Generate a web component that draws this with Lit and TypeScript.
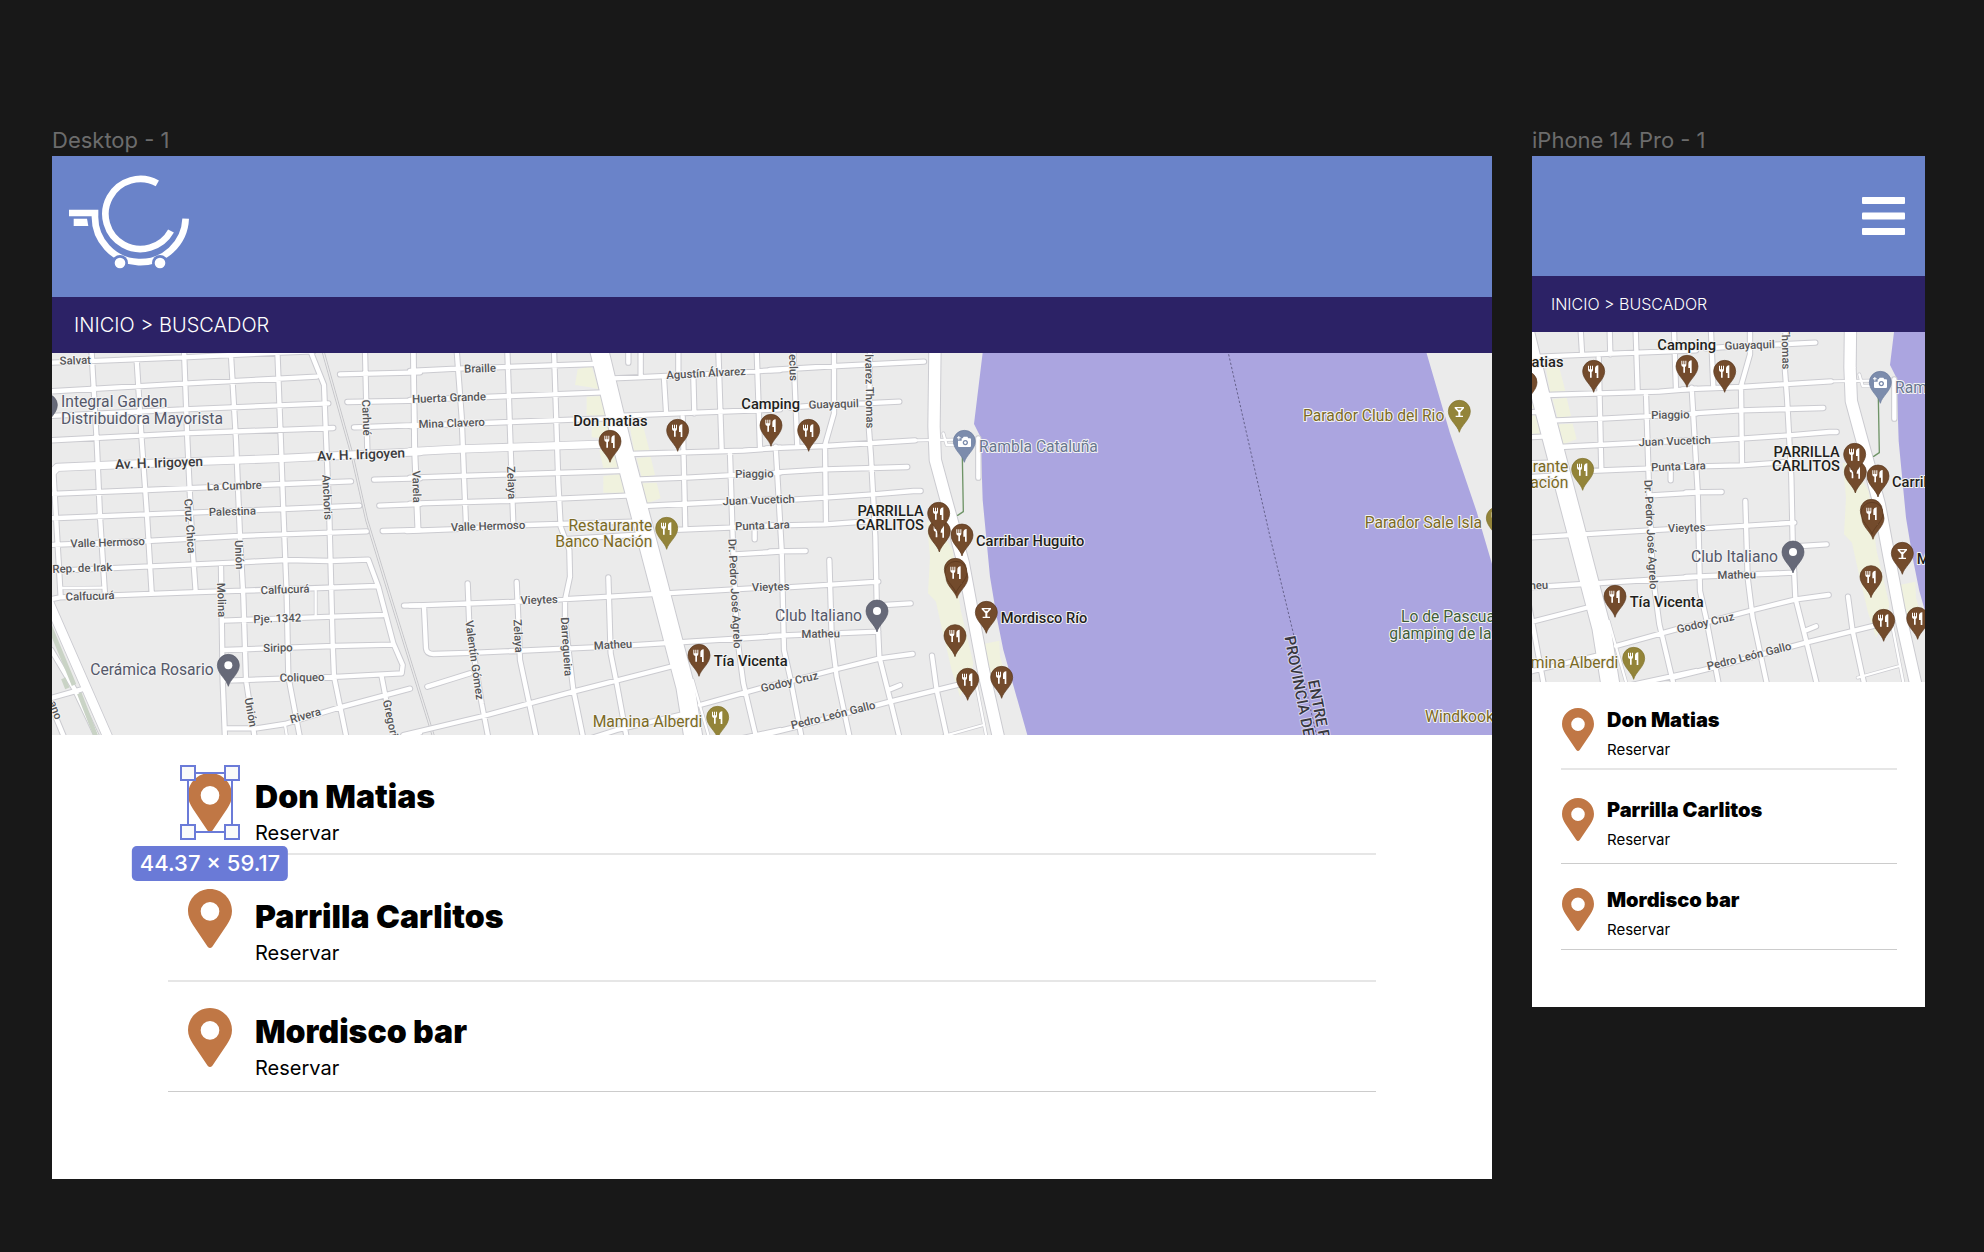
import { LitElement, html, css, svg } from "lit";
import { customElement, property } from "lit/decorators.js";
import { classMap } from "lit/directives/class-map.js";

/* ---------- map data: three drawing units per map pixel, in four sheets ---------- */

type Sheet = "a" | "b" | "c" | "d";
const SHEET_X: Record<Sheet, number> = { a: -6, b: 1074, c: 2154, d: 3234 };
const SHEET_Y = -9;

const STREETS: Record<string, string> = {
  a: `M0 38L400 22L690 8L790 4 M0 124L400 101L800 80 M0 198L400 178L835 160 M0 271L400 250L850 234
    M0 432L290 420L470 412L700 402L903 394 M0 505L290 493L700 477L928 467 M0 585L290 573L565 558L950 544
    M0 663L300 649L570 637L710 630L840 633L955 629L985 710L1030 880L1058 945L1055 970L870 980L530 992
    M0 748L30 742L400 728L580 722L980 708 M520 812L850 800L1000 795 M525 900L850 888L1030 884
    M530 1135L620 1135L705 1122L870 1072L1080 1016 M870 73L1110 67 M892 156L1110 152 M912 232L1110 225
    M972 389L1110 385 M988 467L1110 462 M998 543L1110 540 M1062 767L1110 766
    M10 365L18 500L32 740 M125 10L140 270L150 500L165 735 M260 30L275 270L290 480L305 728
    M402 0L412 270L420 440L428 600L437 725 M542 0L558 270L570 560L580 740L588 990L618 1190
    M682 0L692 260L700 480L710 730L715 980L755 1190 M780 0L822 105L828 260L838 500L848 880L852 980L895 1190
    M513 650L518 990L526 1190 M945 0L952 300 M1090 0L1093 300L1103 540 M995 980L1035 1190
    M1050 1164L1110 1148 M0 1045L95 1018 M0 1060L50 1180`,
  b: `M0 63L140 56L550 42 M0 150L300 138L580 127 M0 228L300 216L590 205 M0 383L150 378L630 363
    M0 461L310 452L650 437 M-10 543L120 538L350 525L670 515 M450 568L720 552 M0 767L330 755L600 740L1110 710
    M42 770L48 895Q50 912 70 912L200 908L600 890L1110 858
    M10 0L15 300L25 540 M140 0L155 200L162 380L168 525 M292 0L302 300L310 525
    M432 0L445 400L452 530L478 600L480 680L465 750L465 810L490 1020L525 1190
    M173 700L178 830L215 1060L240 1190 M320 696L325 810L330 930L385 1190 M595 682L602 910L620 1000L655 1190
    M52 1010L180 970 M-20 1155L220 1098L490 1025L790 948 M520 1172L620 1140L830 1090
    M610 85L770 78L1110 60 M640 197L860 188L1110 178 M660 312L1000 302L1110 293 M690 388L830 383L1110 368
    M700 468L1110 447 M780 540L960 533L1110 525 M975 613L1110 605
    M655 0L655 38 M692 0L692 82 M762 85L768 185 M805 0L805 75 M850 80L853 190 M925 0L935 300 M818 200L826 535
    M1040 0L1050 295 M960 310L968 560L980 850L1000 1000L1045 1190 M1034 525L1034 568 M870 1065L1050 1015L1110 1000
    M880 1190L1110 1140`,
  c: `M0 60L200 48L462 35 M60 172L120 168L388 155 M-10 295L165 288L435 271 M20 367L165 358L412 351
    M0 453L165 443L310 433L430 423L452 423 M0 527L165 523L310 513 M0 604L107 603 M0 715L185 704L325 695
    M0 858L325 845 M345 765L422 760 M0 1010L190 960L330 925L428 912 M-40 1160L60 1135L360 1055L590 998
    M355 1020L390 1006 M70 0L82 290 M192 0L192 190L165 285L168 520
    M300 0L297 240L303 320L316 560L320 750L328 920L362 1055L395 1190 M17 290L35 600L42 900L60 980L100 1190
    M178 630L185 860L200 980L245 1190 M486 917L500 1020L537 1190 M625 265L625 383`,
};

const NARROW: Record<string, string> = {
  a: `M32 714L165 713 M797 722L797 800 M705 1125L716 1190`,
  b: `M848 990L905 1190`,
  c: `M435 271L600 268 M520 250L530 285L560 285 M515 1160L640 1125 M612 970L655 1190`,
};

const AVENUES: Record<string, string> = {
  a: `M4 370L22 352L420 335L700 325L1110 305`,
  b: `M0 305L150 297L600 282`,
};

const BOULEVARD = `M565 -10L640 300L745 700L797 900L826 1010L856 1200`;
const RIVERSIDE = `M495 -10L492 230L496 330L523 430L548 520L580 640L606 780L640 960L694 1200`;
const WATER = `M639 0L612 222L632 262L638 450L660 680L680 800L700 900L772 1155L784 1200H2300V1100L2120 485L2040 250L1967 0Z`;

const PARKS: Record<string, string> = {
  b: `M503 58L545 48L566 118L540 112L495 105Z M530 140L575 138L592 200L530 195Z M545 215L604 212L616 240L580 265L545 262Z
    M568 300L612 295L627 352L580 354Z M580 378L632 372L642 428L580 428Z M660 232L700 230L718 300L672 303Z
    M680 325L722 320L735 375L695 382Z M697 400L740 398L752 445L712 460Z`,
  c: `M470 515L500 520L548 600L572 780L610 940L604 970L570 1040L545 960L512 820L498 755L474 730L480 620Z
    M640 882L688 872L690 920L712 990L660 980Z`,
};

type Kind = "street" | "road" | "place" | "poi" | "food" | "sight" | "camp" | "border";
type Anchor = "start" | "middle" | "end";
interface Label { s: Sheet; x: number; y: number; t: string; k?: Kind; r?: number; a?: Anchor }

const LABELS: Label[] = [
  { s: "a", x: 76, y: 31, t: "Salvat", r: -2 },
  { s: "a", x: 950, y: 203, t: "Carhué", r: 88 },
  { s: "a", x: 327, y: 338, t: "Av. H. Irigoyen", k: "road", r: -2 },
  { s: "a", x: 933, y: 313, t: "Av. H. Irigoyen", k: "road", r: -2 },
  { s: "a", x: 553, y: 407, t: "La Cumbre", r: -2 },
  { s: "a", x: 547, y: 484, t: "Palestina", r: -2 },
  { s: "a", x: 420, y: 528, t: "Cruz Chica", r: 86 },
  { s: "a", x: 832, y: 442, t: "Anchoris", r: 87 },
  { s: "a", x: 173, y: 577, t: "Valle Hermoso", r: -2 },
  { s: "a", x: 568, y: 614, t: "Unión", r: 88 },
  { s: "a", x: 97, y: 654, t: "Rep. de Irak", r: -2 },
  { s: "a", x: 515, y: 750, t: "Molina", r: 88 },
  { s: "a", x: 120, y: 738, t: "Calfucurá", r: -2 },
  { s: "a", x: 705, y: 718, t: "Calfucurá", r: -2 },
  { s: "a", x: 682, y: 805, t: "Pje. 1342", r: -2 },
  { s: "a", x: 684, y: 893, t: "Siripo", r: -1 },
  { s: "a", x: 756, y: 982, t: "Coliqueo", r: -1 },
  { s: "a", x: 603, y: 1087, t: "Unión", r: 80 },
  { s: "a", x: 766, y: 1096, t: "Rivera", r: -16 },
  { s: "a", x: 1010, y: 1050, t: "Gregori", r: 78, a: "start" },
  { s: "a", x: 17, y: 1080, t: "ano", r: 70 },
  { s: "a", x: 33, y: 156, t: "Integral Garden", k: "place", a: "start" },
  { s: "a", x: 33, y: 207, t: "Distribuidora Mayorista", k: "place", a: "start" },
  { s: "a", x: 491, y: 960, t: "Cerámica Rosario", k: "place", a: "end" },
  { s: "b", x: 20, y: 410, t: "Varela", r: 88 },
  { s: "b", x: 210, y: 55, t: "Braille", r: -2 },
  { s: "b", x: 117, y: 143, t: "Huerta Grande", r: -2 },
  { s: "b", x: 125, y: 219, t: "Mina Clavero", r: -2 },
  { s: "b", x: 305, y: 398, t: "Zelaya", r: 88 },
  { s: "b", x: 234, y: 528, t: "Valle Hermoso", r: -2 },
  { s: "b", x: 888, y: 69, t: "Agustín Álvarez", r: -3 },
  { s: "b", x: 1033, y: 371, t: "Piaggio", r: -1 },
  { s: "b", x: 1046, y: 450, t: "Juan Vucetich", r: -2 },
  { s: "b", x: 1057, y: 526, t: "Punta Lara", r: -2 },
  { s: "b", x: 975, y: 731, t: "Dr. Pedro José Agrelo", r: 87 },
  { s: "b", x: 387, y: 749, t: "Vieytes", r: -2 },
  { s: "b", x: 194, y: 930, t: "Valentín Gómez", r: 82 },
  { s: "b", x: 325, y: 858, t: "Zelaya", r: 87 },
  { s: "b", x: 470, y: 890, t: "Darregueira", r: 86 },
  { s: "b", x: 609, y: 884, t: "Matheu", r: -3 },
  { s: "b", x: 601, y: 213, t: "Don matias", k: "poi" },
  { s: "b", x: 1082, y: 162, t: "Camping", k: "poi" },
  { s: "b", x: 911, y: 933, t: "Tía Vicenta", k: "poi", a: "start" },
  { s: "b", x: 727, y: 526, t: "Restaurante", k: "food", a: "end" },
  { s: "b", x: 727, y: 574, t: "Banco Nación", k: "food", a: "end" },
  { s: "b", x: 877, y: 1116, t: "Mamina Alberdi", k: "food", a: "end" },
  { s: "c", x: 191, y: 162, t: "Guayaquil", r: -2 },
  { s: "c", x: 72, y: 93, t: "eclus", r: 88, a: "end" },
  { s: "c", x: 301, y: 235, t: "lvarez Thomas", r: 89, a: "end" },
  { s: "c", x: 2, y: 710, t: "Vieytes", r: -2 },
  { s: "c", x: 152, y: 851, t: "Matheu", r: -1 },
  { s: "c", x: 58, y: 995, t: "Godoy Cruz", r: -13 },
  { s: "c", x: 189, y: 1095, t: "Pedro León Gallo", r: -14 },
  { s: "c", x: 461, y: 483, t: "PARRILLA", k: "poi", a: "end" },
  { s: "c", x: 462, y: 526, t: "CARLITOS", k: "poi", a: "end" },
  { s: "c", x: 618, y: 572, t: "Carribar Huguito", k: "poi", a: "start" },
  { s: "c", x: 692, y: 804, t: "Mordisco Río", k: "poi", a: "start" },
  { s: "c", x: 276, y: 797, t: "Club Italiano", k: "place", a: "end" },
  { s: "c", x: 627, y: 289, t: "Rambla Cataluña", k: "sight", a: "start" },
  { s: "d", x: 943, y: 198, t: "Parador Club del Rio", k: "food", a: "end" },
  { s: "d", x: 1056, y: 519, t: "Parador Sale Isla", k: "food", a: "end" },
  { s: "d", x: 813, y: 801, t: "Lo de Pascua", k: "camp", a: "start" },
  { s: "d", x: 778, y: 851, t: "glamping de la", k: "camp", a: "start" },
  { s: "d", x: 885, y: 1099, t: "Windkook", k: "food", a: "start" },
  { s: "d", x: 479, y: 858, t: "PROVINCIA DE", k: "border", r: 79, a: "start" },
  { s: "d", x: 550, y: 990, t: "ENTRE R", k: "border", r: 79, a: "start" },
];

type Glyph = "fork" | "glass" | "dot" | "camera";
const PINS: [Sheet, number, number, string, Glyph][] = [
  ["a", -11, 165, "slate", "dot"],
  ["a", 535, 946, "slate", "dot"],
  ["b", 600, 274, "brown", "fork"],
  ["b", 803, 241, "brown", "fork"],
  ["b", 1083, 226, "brown", "fork"],
  ["b", 867, 916, "brown", "fork"],
  ["b", 770, 535, "olive", "fork"],
  ["b", 923, 1102, "olive", "fork"],
  ["c", 116, 241, "brown", "fork"],
  ["c", 583, 274, "steel", "camera"],
  ["c", 508, 543, "brown", "fork"],
  ["c", 506, 490, "brown", "fork"],
  ["c", 576, 555, "brown", "fork"],
  ["c", 556, 658, "brown", "fork"],
  ["c", 561, 682, "brown", "fork"],
  ["c", 558, 667, "brown", "fork"],
  ["c", 649, 787, "brown", "glass"],
  ["c", 321, 783, "slate", "dot"],
  ["c", 555, 857, "brown", "fork"],
  ["c", 593, 988, "brown", "fork"],
  ["c", 695, 982, "brown", "fork"],
  ["d", 988, 184, "olive", "glass"],
  ["d", 1102, 504, "olive", "fork"],
];

const GLYPHS: Record<Glyph, unknown> = {
  fork: svg`<path class="glyph" d="M-17 -17h3v11h3v-11h3v11h3v-11h3v13q0 5-4 6v17h-5v-17q-6-1-6-6zM14 -18v38h-5v-15h-5v-13q0-9 10-10z"/>`,
  glass: svg`<path class="glyph" fill-rule="evenodd" d="M-14 -13h28v4l-11 12v10h8v4h-22v-4h8v-10l-11-12zM-7 -9l3 4h8l3-4z"/>`,
  dot: svg`<circle class="glyph" r="12"/>`,
  camera: svg`<path class="glyph" fill-rule="evenodd" d="M-8 -9h3l3-5h11l3 5h5q3 0 3 3v20q0 3-3 3h-33q-3 0-3-3v-16h11zM3 -4a8 8 0 1 0 .1 0zM3 0a4 4 0 1 1-.1 0zM-18 -16h3v4h4v3h-4v4h-3v-4h-4v-3h4z"/>`,
};

/* ---------- street map ---------- */

@customElement("street-map")
export class StreetMap extends LitElement {
  @property() view = "0 0 4320 1146";

  static styles = css`
    :host { display: block; }
    .map { display: block; width: 100%; height: auto; background: #ebebeb; }
    .line { fill: none; stroke-linecap: round; stroke-linejoin: round; }
    .casing { stroke: #cbcbd0; }
    .fill { stroke: #fff; }
    .street.casing { stroke-width: 19; }
    .street.fill { stroke-width: 13; }
    .narrow.casing { stroke-width: 11; }
    .narrow.fill { stroke-width: 7; }
    .avenue.casing { stroke-width: 27; }
    .avenue.fill { stroke-width: 22; }
    .boulevard.casing { stroke-width: 60; }
    .boulevard.fill { stroke-width: 54; }
    .riverside.casing { stroke-width: 40; }
    .riverside.fill { stroke-width: 34; }
    .highway.casing { stroke-width: 32; }
    .highway.fill { stroke-width: 27; }
    .water { fill: #aba5e0; }
    .park { fill: #f0f2de; }
    .verge { fill: none; stroke: #c9d3c5; stroke-width: 14; }
    .rail { stroke: #c4c4c8; stroke-width: 9; }
    .rail-core { stroke: #ebebeb; stroke-width: 4; }
    .trail { stroke: #6f9467; stroke-width: 4; }
    .frontier { stroke: #66628c; stroke-width: 3; stroke-dasharray: 7 6; stroke-linecap: butt; }
    .label {
      font-family: Roboto, "Noto Sans", sans-serif;
      font-size: 34px;
      font-weight: 500;
      fill: #555557;
      stroke: #f4f4f4;
      stroke-width: 6;
      stroke-linejoin: round;
      paint-order: stroke;
    }
    .road { font-size: 41px; fill: #3a3a3c; }
    .poi { font-size: 44px; fill: #1f1f20; }
    .border { font-size: 46px; fill: #38383e; stroke: #d6d3f0; }
    .place, .food, .sight, .camp { font-size: 47px; font-weight: 400; }
    .place { fill: #55586a; }
    .food { fill: #7b6a24; }
    .sight { fill: #68768f; }
    .camp { fill: #3f5c3a; }
    .pin { stroke-width: 2; }
    .brown { fill: #734b2c; stroke: #57371d; }
    .olive { fill: #938439; stroke: #7f712b; }
    .slate { fill: #666978; stroke: #575a69; }
    .steel { fill: #7c8cac; stroke: #697a9c; }
    .glyph { fill: #fff; stroke: none; }
  `;

  private sheet(s: string, content: unknown) {
    return svg`<g transform="translate(${SHEET_X[s as Sheet]} ${SHEET_Y})">${content}</g>`;
  }

  private lines(set: Record<string, string>, name: string) {
    return Object.entries(set).map(([s, d]) => this.sheet(s, svg`<path class="line ${name}" d=${d}/>`));
  }

  private network(pass: string) {
    return svg`
      ${this.lines(NARROW, `narrow ${pass}`)}
      ${this.lines(STREETS, `street ${pass}`)}
      ${this.lines(AVENUES, `avenue ${pass}`)}
      ${this.lines({ a: "M-12 735L0 765L186 1190" }, `highway ${pass}`)}
      ${this.lines({ a: "M4 900L75 1020L155 1190" }, `street ${pass}`)}
      ${this.lines({ b: BOULEVARD }, `boulevard ${pass}`)}
      ${this.lines({ c: RIVERSIDE }, `riverside ${pass}`)}`;
  }

  /* Only the labels that reach into the current view are drawn. */
  private inView(l: Label) {
    const [left, top, width, height] = this.view.split(" ").map(Number);
    const length = l.t.length * (l.k ? 21 : 17);
    const angle = ((l.r ?? 0) * Math.PI) / 180;
    const from = l.a === "start" ? 0 : l.a === "end" ? -length : -length / 2;
    const x = l.x + SHEET_X[l.s];
    const y = l.y + SHEET_Y;
    const xs = [x + from * Math.cos(angle), x + (from + length) * Math.cos(angle)];
    const ys = [y + from * Math.sin(angle), y + (from + length) * Math.sin(angle)];
    return Math.max(...xs) > left && Math.min(...xs) < left + width
      && Math.max(...ys) > top && Math.min(...ys) < top + height;
  }

  render() {
    return html`
      <svg class="map" viewBox=${this.view} role="img" aria-label="Mapa de restaurantes">
        ${Object.entries(PARKS).map(([s, d]) => this.sheet(s, svg`<path class="park" d=${d}/>`))}
        ${this.sheet("c", svg`<path class="water" d=${WATER}/>`)}
        ${this.lines({ a: "M818 0L905 310L950 510L1005 690L1110 1030L1160 1190" }, "rail")}
        ${this.lines({ a: "M818 0L905 310L950 510L1005 690L1110 1030L1160 1190" }, "rail-core")}
        ${this.network("casing")}
        ${this.network("fill")}
        ${this.sheet("a", svg`<path class="verge" d="M0 830L72 1005M40 985L52 1015M88 1030L146 1180"/>`)}
        ${this.lines({ c: "M577 320L580 485L563 496" }, "trail")}
        ${this.lines({ d: "M293 0L420 560L490 850L565 1180" }, "frontier")}
        ${LABELS.filter((l) => this.inView(l)).map((l) => svg`
          <text class="label ${l.k ?? "street-name"}" dy="0.35em" text-anchor=${l.a ?? "middle"}
            transform="translate(${l.x + SHEET_X[l.s]} ${l.y + SHEET_Y}) rotate(${l.r ?? 0})">${l.t}</text>`)}
        ${PINS.map(([s, x, y, tone, glyph]) => svg`
          <g transform="translate(${x + SHEET_X[s]} ${y + SHEET_Y})">
            <path class="pin ${tone}" d="M0 63C-5 42-33 25-33 0A33 33 0 1 1 33 0C33 25 5 42 0 63Z"/>
            ${GLYPHS[glyph]}
          </g>`)}
      </svg>`;
  }
}

/* ---------- list of venues ---------- */

const VENUES = ["Don Matias", "Parrilla Carlitos", "Mordisco bar"];

@customElement("venue-list")
export class VenueList extends LitElement {
  @property({ type: Boolean }) compact = false;
  @property({ type: Boolean }) selection = false;

  static styles = css`
    :host { display: block; font-family: Inter, "Open Sans", sans-serif; color: #000; }
    .list { list-style: none; margin: 0; padding: 0 116px 87px; }
    .row {
      display: grid;
      grid-template-columns: 44px 1fr;
      column-gap: 23px;
      align-items: start;
      padding-left: 20px;
      border-bottom: 2px solid #e6e6e6;
    }
    .row:nth-child(1) { padding-top: 38px; padding-bottom: 8px; }
    .row:nth-child(2) { padding-top: 34px; padding-bottom: 15px; }
    .row:nth-child(3) { padding-top: 26px; padding-bottom: 11px; border-bottom: 1px solid #ccc; }
    .marker { position: relative; }
    .pin { display: block; width: 100%; height: auto; fill: #c07745; }
    .text { display: flex; flex-direction: column; align-items: flex-start; gap: 4px; padding-top: 4px; }
    .row:nth-child(2) .text { padding-top: 8px; }
    .name { margin: 0; font-size: 32px; line-height: 40px; font-weight: 900; }
    .book { font-size: 20px; line-height: 24px; color: inherit; text-decoration: none; }

    .compact .row {
      grid-template-columns: 32px 1fr;
      column-gap: 13px;
      padding-left: 1px;
    }
    .list.compact { padding: 0 28px 57px 29px; }
    .compact .row:nth-child(1) { padding-top: 26px; padding-bottom: 8px; }
    .compact .row:nth-child(2) { padding-top: 28px; padding-bottom: 13px; border-bottom: 1px solid #ccc; }
    .compact .row:nth-child(3) { padding-top: 24px; padding-bottom: 9px; }
    .compact .text, .compact .row:nth-child(2) .text { gap: 8px; padding-top: 0; }
    .compact .name { font-size: 20px; line-height: 24px; }
    .compact .book { font-size: 15px; line-height: 20px; }

    /* selection overlay, drawn over the list */
    .outline { position: absolute; inset: -1px; border: 2px solid #6b7bd8; }
    .handle { position: absolute; width: 12px; height: 12px; border: 2px solid #6b7bd8; background: #fafafa; }
    .nw { left: -9px; top: -9px; }
    .ne { right: -9px; top: -9px; }
    .sw { left: -9px; bottom: -9px; }
    .se { right: -9px; bottom: -9px; }
    .size {
      position: absolute;
      z-index: 1;
      left: 50%;
      top: 100%;
      transform: translateX(-50%);
      margin-top: 14px;
      padding: 0 8px;
      border-radius: 5px;
      background: #6a7ad7;
      color: #fff;
      font-size: 22px;
      line-height: 35px;
      font-weight: 500;
      white-space: nowrap;
    }
  `;

  render() {
    return html`
      <ul class=${classMap({ list: true, compact: this.compact })}>
        ${VENUES.map((name, i) => html`
          <li class="row">
            <div class="marker">
              <svg class="pin" viewBox="0 0 132 178" aria-hidden="true">
                <path fill-rule="evenodd" d="M66 0C102 0 132 29 132 66C132 82 126 94 117 108L73 173Q66 181 59 173L15 108C6 94 0 82 0 66C0 29 30 0 66 0ZM66 39A28 28 0 1 0 66 95A28 28 0 1 0 66 39Z"/>
              </svg>
              ${this.selection && i === 0 ? html`
                <span class="outline">
                  <span class="handle nw"></span><span class="handle ne"></span>
                  <span class="handle sw"></span><span class="handle se"></span>
                </span>
                <span class="size">44.37 × 59.17</span>` : ""}
            </div>
            <div class="text">
              <h2 class="name">${name}</h2>
              <a class="book" href="#reservar">Reservar</a>
            </div>
          </li>`)}
      </ul>`;
  }
}

/* ---------- canvas with both frames ---------- */

@customElement("app-root")
export class AppRoot extends LitElement {
  static styles = css`
    :host { display: block; font-family: Inter, "Open Sans", sans-serif; }
    .canvas {
      box-sizing: border-box;
      min-height: 100vh;
      display: grid;
      grid-template-columns: 1440fr 393fr;
      column-gap: 40px;
      align-items: start;
      padding: 126px 59px 40px 52px;
      background: #181818;
    }
    .title { margin: 0 0 2px; font-size: 22px; line-height: 28px; font-weight: 400; color: #6c6c6c; }
    .frame { background: #fff; overflow: hidden; }
    .bar { display: flex; align-items: center; background: #6a83c9; }
    .wide { padding: 18px 17px 27px; }
    .slim { justify-content: flex-end; padding: 41px 20px; }
    .logo { display: block; width: 120px; height: 96px; }
    .ink { fill: none; stroke: #fff; stroke-width: 20; }
    .solid { fill: #fff; }
    .gap { fill: #6a83c9; }
    .menu { display: block; margin: 0; padding: 0; border: 0; background: none; }
    .menu-icon { display: block; width: 43px; height: 38px; }
    .crumbs { padding: 16px 22px; background: #2c2266; color: #fff; font-size: 20px; line-height: 24px; font-weight: 300; }
    .slim-crumbs { padding: 16px 19px; font-size: 16px; }
    .crumb { color: inherit; text-decoration: none; }
  `;

  render() {
    return html`
      <main class="canvas">
        <section>
          <h1 class="title">Desktop - 1</h1>
          <div class="frame">
            <header class="bar wide">
              <svg class="logo" viewBox="88 162 360 288" role="img" aria-label="Logo">
                <path class="ink" d="M354 190A105 105 0 1 0 395 333" transform="translate(-1 0)"/>
                <path class="ink" d="M88 279H166V285A136 136 0 0 0 438 296"/>
                <path class="solid" d="M102 296H142L146 318H102Z"/>
                <circle class="gap" cx="241" cy="429" r="24"/>
                <circle class="gap" cx="361" cy="429" r="24"/>
                <circle class="solid" cx="241" cy="429" r="16"/>
                <circle class="solid" cx="361" cy="429" r="16"/>
              </svg>
            </header>
            <nav class="crumbs"><a class="crumb" href="#inicio">INICIO</a> &gt; BUSCADOR</nav>
            <street-map view="0 0 4320 1146"></street-map>
            <venue-list selection></venue-list>
          </div>
        </section>
        <section>
          <h1 class="title">iPhone 14 Pro - 1</h1>
          <div class="frame">
            <header class="bar slim">
              <button class="menu" type="button" aria-label="Menú">
                <svg class="menu-icon" viewBox="0 0 86 76" aria-hidden="true">
                  <rect class="solid" y="0" width="86" height="14" rx="2"/>
                  <rect class="solid" y="31" width="86" height="14" rx="2"/>
                  <rect class="solid" y="62" width="86" height="14" rx="2"/>
                </svg>
              </button>
            </header>
            <nav class="crumbs slim-crumbs"><a class="crumb" href="#inicio">INICIO</a> &gt; BUSCADOR</nav>
            <street-map view="1692 114 1179 1050"></street-map>
            <venue-list compact></venue-list>
          </div>
        </section>
      </main>`;
  }
}
